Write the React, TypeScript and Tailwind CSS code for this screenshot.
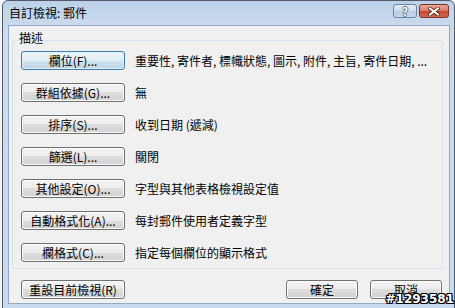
import React from 'react';
import { clsx } from 'clsx';

interface Row {
  label: string;
  desc: string;
  focused?: boolean;
}

const rows: Row[] = [
  { label: '欄位(F)...', desc: '重要性, 寄件者, 標幟狀態, 圖示, 附件, 主旨, 寄件日期, ...', focused: true },
  { label: '群組依據(G)...', desc: '無' },
  { label: '排序(S)...', desc: '收到日期 (遞減)' },
  { label: '篩選(L)...', desc: '關閉' },
  { label: '其他設定(O)...', desc: '字型與其他表格檢視設定值' },
  { label: '自動格式化(A)...', desc: '每封郵件使用者定義字型' },
  { label: '欄格式(C)...', desc: '指定每個欄位的顯示格式' },
];

const WinButton: React.FC<{ children: React.ReactNode; focused?: boolean; className?: string }> = ({
  children,
  focused,
  className,
}) => (
  <button
    className={clsx(
      'flex h-[19px] shrink-0 items-center justify-center rounded-[3px] border text-[12px] leading-none text-black',
      focused
        ? 'border-[#3c7fb1] bg-[linear-gradient(#eef6fb,#e1edf5_50%,#d0e2ee_50%,#bed5e6)] shadow-[inset_0_0_0_1px_#dff0fa]'
        : 'border-[#707070] bg-[linear-gradient(#f4f4f4,#ececec_50%,#dedede_50%,#d1d1d1)] shadow-[inset_0_0_0_1px_#fbfbfb]',
      className
    )}
  >
    {children}
  </button>
);

const CloseGlyph = () => (
  <svg width="12" height="9" viewBox="0 0 12 9">
    <path d="M2 1.5 L10 7.5 M10 1.5 L2 7.5" stroke="#5a1a10" strokeWidth="3.6" strokeLinecap="square" />
    <path d="M2 1.5 L10 7.5 M10 1.5 L2 7.5" stroke="#ffffff" strokeWidth="2" strokeLinecap="square" />
  </svg>
);

export default function App() {
  return (
    <div className="relative h-[308px] w-[455px] overflow-hidden bg-[#f4f4f4] font-['Noto_Sans_CJK_TC',sans-serif] text-black">
      <div className="ml-[2px] flex h-[312px] w-[453px] flex-col rounded-t-[6px] border border-[#4f5b69] bg-[linear-gradient(180deg,#bcd1e9,#cddcef_30px,#c8daef)]">
        {/* title bar */}
        <div className="flex h-[24px] shrink-0 items-start">
          <span className="ml-[6px] mt-[5px] text-[12px] leading-[14px]">自訂檢視: 郵件</span>
          <div className="ml-auto mr-[5px] mt-[3px] flex gap-[2px]">
            <div className="flex h-[14px] w-[24px] items-center justify-center rounded-[3px] border border-[#6d84a0] bg-[linear-gradient(#e6eef7,#cddbea_50%,#b7cbe0_50%,#c7d8ea)] text-[11px] font-bold leading-none text-white [text-shadow:1px_0_0_#5f7088,-1px_0_0_#5f7088,0_1px_0_#5f7088,0_-1px_0_#5f7088]">
              ?
            </div>
            <div className="flex h-[14px] w-[30px] items-center justify-center rounded-[3px] border border-[#7a3326] bg-[linear-gradient(#e9a898,#d77b66_50%,#c2452d_50%,#d06a50)]">
              <CloseGlyph />
            </div>
          </div>
        </div>

        {/* client area */}
        <div className="ml-[5px] mr-[4px] flex h-[279px] flex-col border border-[#93a9c3] bg-[#f0f0f0] pt-[14px]">
          <div className="relative ml-[3px] mr-[6px] rounded-[3px] border border-[#d5dfe5] pb-[6px] pl-[8px] pt-[10px]">
            <span className="absolute left-[5px] top-[-10px] bg-[#f0f0f0] px-[1px] text-[12px] leading-[14px]">描述</span>
            <div className="flex flex-col gap-[13px]">
              {rows.map((r) => (
                <div key={r.label} className="flex items-center gap-[10px]">
                  <WinButton focused={r.focused} className="w-[104px]">
                    {r.label}
                  </WinButton>
                  <span className="whitespace-nowrap text-[12px] leading-[14px]">{r.desc}</span>
                </div>
              ))}
            </div>
          </div>

          <div className="mt-[11px] flex items-center pl-[12px] pr-[7px]">
            <WinButton className="w-[104px]">重設目前檢視(R)</WinButton>
            <div className="ml-auto flex gap-[12px]">
              <WinButton className="w-[72px]">確定</WinButton>
              <WinButton className="w-[72px]">取消</WinButton>
            </div>
          </div>
        </div>
      </div>

      <span className="absolute bottom-[2px] right-[1px] font-['DejaVu_Sans',sans-serif] text-[12px] font-bold leading-[13px] text-white [text-shadow:1px_0_0_#000,-1px_0_0_#000,0_1px_0_#000,0_-1px_0_#000,1px_1px_0_#000,-1px_-1px_0_#000,1px_-1px_0_#000,-1px_1px_0_#000]">
        #1293581
      </span>
    </div>
  );
}
